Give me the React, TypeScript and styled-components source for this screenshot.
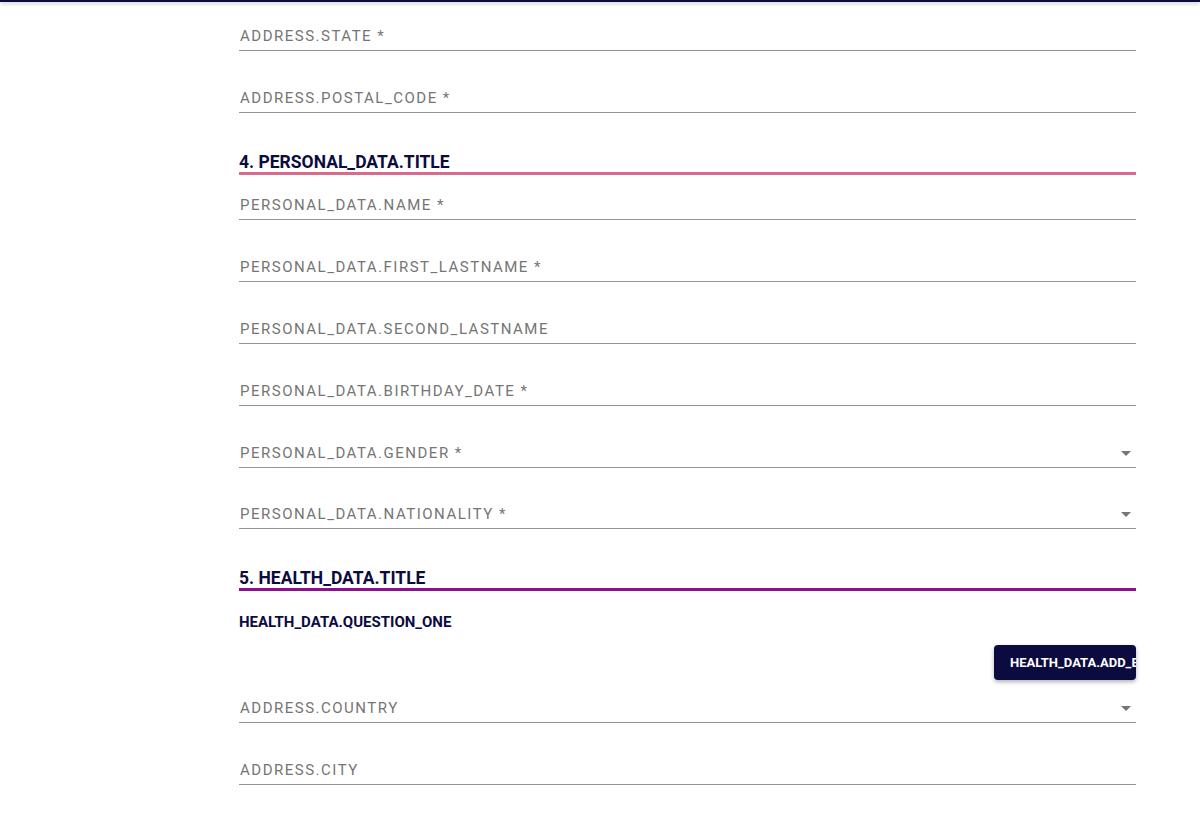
import React from "react";
import styled, { createGlobalStyle } from "styled-components";

const Global = createGlobalStyle`
  html, body { margin: 0; padding: 0; background: #fff; }
  body { font-family: Roboto, "Noto Sans", Arial, sans-serif; overflow: hidden; }
`;

const TopBar = styled.div`
  height: 2px;
  background: #0b0b3f;
  box-shadow: 0 1px 4px rgba(11, 11, 63, 0.35);
`;

const Form = styled.div`
  margin-left: 239px;
  width: 897px;
  display: flex;
  flex-direction: column;
`;

const Field = styled.div<{ $h: number }>`
  height: ${(p) => p.$h}px;
  box-sizing: border-box;
  display: flex;
  align-items: flex-end;
  border-bottom: 1px solid #949494;
`;

const Label = styled.span`
  flex: 1;
  font-size: 15px;
  line-height: 20px;
  padding-bottom: 4px;
  padding-left: 1px;
  letter-spacing: 1.5px;
  color: #757575;
  text-transform: uppercase;
`;

const Arrow = styled.svg`
  width: 24px;
  height: 24px;
  margin-bottom: 2px;
  margin-right: -2px;
  fill: #757575;
`;

const SectionTitle = styled.h2<{ $color: string }>`
  margin: 0;
  padding-top: 39px;
  padding-bottom: 0;
  font-size: 17.5px;
  line-height: 20px;
  font-weight: 700;
  color: #0b0b3f;
  border-bottom: 3px solid ${(p) => p.$color};
`;

const Question = styled.p`
  margin: 0;
  padding-top: 21px;
  font-size: 15px;
  line-height: 20px;
  font-weight: 700;
  color: #0b0b3f;
`;

const ButtonRow = styled.div`
  display: flex;
  justify-content: flex-end;
  margin-top: 13px;
`;

const Button = styled.button`
  width: 142px;
  height: 35px;
  padding: 0 0 0 16px;
  border: none;
  border-radius: 4px;
  background: #0b0b3f;
  color: #fff;
  font-family: Roboto, Arial, sans-serif;
  font-size: 13px;
  font-weight: 700;
  text-align: left;
  white-space: nowrap;
  overflow: hidden;
  box-shadow: 0 2px 4px rgba(0, 0, 0, 0.3);
`;

const Dropdown = () => (
  <Arrow viewBox="0 0 24 24">
    <path d="M7 10l5 5 5-5z" />
  </Arrow>
);

const TextField = ({ label, h = 62, select = false }: { label: string; h?: number; select?: boolean }) => (
  <Field $h={h}>
    <Label>{label}</Label>
    {select && <Dropdown />}
  </Field>
);

export default function App() {
  return (
    <>
      <Global />
      <TopBar />
      <Form>
        <TextField label="ADDRESS.STATE *" h={49} />
        <TextField label="ADDRESS.POSTAL_CODE *" />
        <SectionTitle $color="#d86b8e">4. PERSONAL_DATA.TITLE</SectionTitle>
        <TextField label="PERSONAL_DATA.NAME *" h={45} />
        <TextField label="PERSONAL_DATA.FIRST_LASTNAME *" />
        <TextField label="PERSONAL_DATA.SECOND_LASTNAME" />
        <TextField label="PERSONAL_DATA.BIRTHDAY_DATE *" />
        <TextField label="PERSONAL_DATA.GENDER *" select />
        <TextField label="PERSONAL_DATA.NATIONALITY *" h={61} select />
        <SectionTitle $color="#8b0f8f">5. HEALTH_DATA.TITLE</SectionTitle>
        <Question>HEALTH_DATA.QUESTION_ONE</Question>
        <ButtonRow>
          <Button>HEALTH_DATA.ADD_BENEFICIARY</Button>
        </ButtonRow>
        <TextField label="ADDRESS.COUNTRY" h={43} select />
        <TextField label="ADDRESS.CITY" />
      </Form>
    </>
  );
}
